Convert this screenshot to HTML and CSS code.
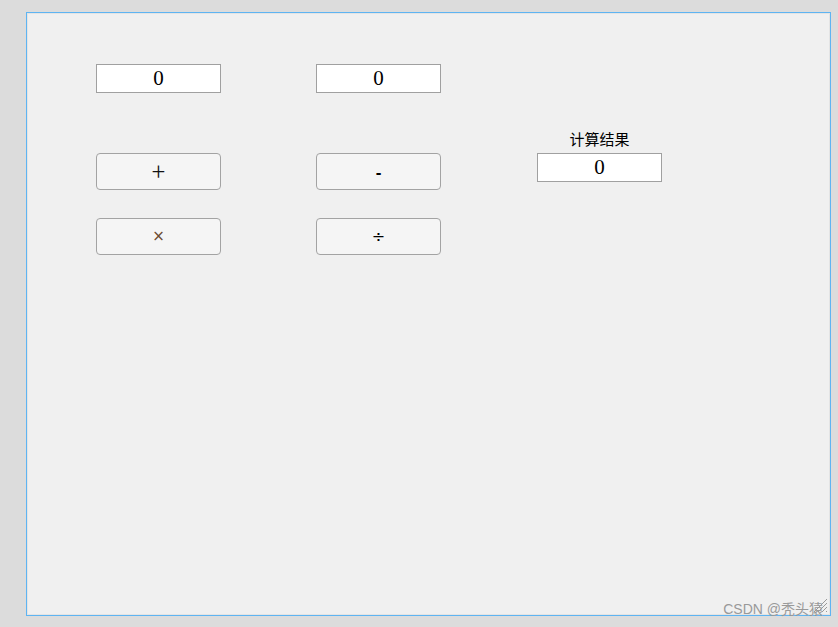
FILE: index.html
```html
<!DOCTYPE html>
<html>
<head>
<meta charset="utf-8">
<link rel="stylesheet" href="styles.css">
</head>
<body>
<div class="window">
  <div class="calc">
    <div class="field">0</div>
    <div class="field">0</div>
    <div class="empty"></div>
    <div class="empty"></div>
    <div class="empty"></div>
    <div class="label">计算结果</div>
    <div class="btn plus">+</div>
    <div class="btn minus">-</div>
    <div class="field">0</div>
    <div class="btn times">×</div>
    <div class="btn">÷</div>
  </div>
  <svg class="grip" width="16" height="16" viewBox="0 0 16 16">
    <path d="M15 2 L2 15 M15 6 L6 15 M15 10 L10 15 M15 14 L14 15" stroke="#9a9a9a" stroke-width="1"/>
  </svg>
  <div class="watermark">CSDN @秃头猿</div>
</div>
</body>
</html>
```
FILE: styles.css
```css
html, body {
  margin: 0;
  padding: 0;
}
body {
  background: #dcdcdc;
  width: 838px;
  height: 627px;
  overflow: hidden;
}
.window {
  position: relative;
  box-sizing: border-box;
  margin: 12px 0 0 26px;
  width: 805px;
  height: 604px;
  border: 1px solid #5eb4f2;
  background: #f0f0f0;
  box-shadow: inset 0 0 0 1px #e4e4e4;
}
.calc {
  display: grid;
  grid-template-columns: 125px 125px 125px;
  grid-template-rows: 29px 60px 37px 65px;
  column-gap: 95px;
  padding: 51px 0 0 69px;
}
.calc > :nth-child(3n) {
  margin-left: 1px;
  margin-right: -1px;
}
.field {
  box-sizing: border-box;
  height: 29px;
  border: 1px solid #a0a0a0;
  background: #fff;
  display: flex;
  align-items: center;
  justify-content: center;
  font-family: "Liberation Serif", serif;
  font-size: 21px;
  color: #000;
}
.label {
  align-self: end;
  padding-bottom: 5px;
  text-align: center;
  font-family: "Noto Sans CJK SC", sans-serif;
  font-size: 15px;
  line-height: 18px;
  color: #000;
}
.btn {
  box-sizing: border-box;
  height: 37px;
  border: 1px solid #a3a3a3;
  border-radius: 4px;
  background: #f5f5f5;
  display: flex;
  align-items: center;
  justify-content: center;
  font-family: "DejaVu Sans", sans-serif;
  font-size: 16px;
  color: #000;
  line-height: 1;
}
.calc > .btn:nth-child(n+10) {
  margin-top: 28px;
}
.btn.plus {
  font-family: "Noto Sans CJK SC", sans-serif;
  font-size: 25px;
  font-weight: 300;
  color: #111;
  padding-bottom: 3px;
}
.btn.minus {
  font-family: "Liberation Sans", sans-serif;
  font-size: 17px;
  font-weight: bold;
  padding-top: 2px;
}
.btn.times {
  color: #6b4a2e;
  font-size: 15px;
}
.grip {
  position: absolute;
  right: 2px;
  bottom: 2px;
}
.watermark {
  position: absolute;
  right: 7px;
  bottom: -3px;
  font-family: "Liberation Sans", "Noto Sans CJK SC", sans-serif;
  font-size: 14px;
  color: #999;
}
```
